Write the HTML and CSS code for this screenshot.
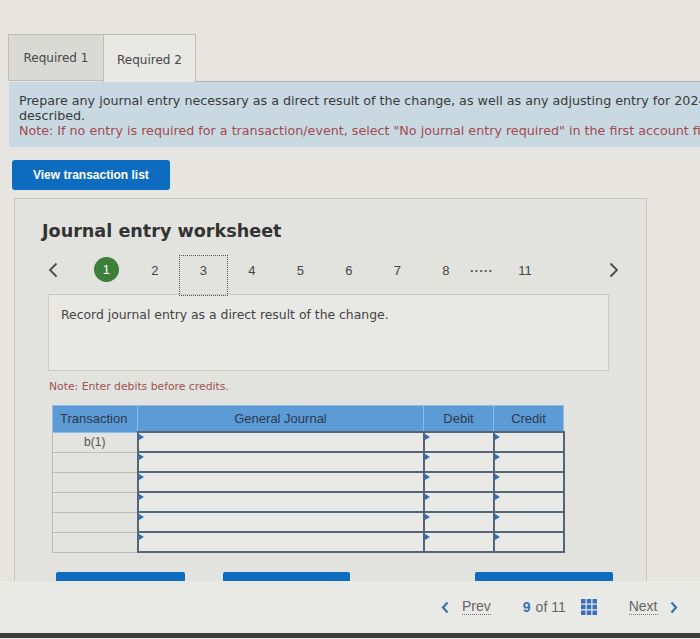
FILE: index.html
```html
<!DOCTYPE html>
<html>
<head>
<meta charset="utf-8">
<title>Journal entry worksheet</title>
<link rel="stylesheet" href="styles.css">
</head>
<body>
<div class="page">
  <div class="tabs">
    <div class="tab">Required 1</div>
    <div class="tab active">Required 2</div>
    <div class="tab-rest"></div>
  </div>

  <div class="instructions">
    <span class="line">Prepare any journal entry necessary as a direct result of the change, as well as any adjusting entry for 2024 related to the situation</span>
    <span class="line">described.</span>
    <span class="line note">Note: If no entry is required for a transaction/event, select "No journal entry required" in the first account field.</span>
  </div>

  <div class="actions">
    <button class="btn-list">View transaction list</button>
  </div>

  <section class="worksheet">
    <h2 class="ws-title">Journal entry worksheet</h2>
    <div class="pager">
      <span class="pg-arrow prev">
        <svg width="10" height="16" viewBox="0 0 10 16"><path d="M8.5 1.5 L2 8 L8.5 14.5" fill="none" stroke="#4a4a4a" stroke-width="1.8"/></svg>
      </span>
      <span class="pg-cell"><span class="pg-current">1</span></span>
      <span class="pg-cell">2</span>
      <span class="pg-cell focused">3</span>
      <span class="pg-cell">4</span>
      <span class="pg-cell">5</span>
      <span class="pg-cell">6</span>
      <span class="pg-cell">7</span>
      <span class="pg-cell">8</span>
      <span class="pg-dots">.....</span>
      <span class="pg-cell last">11</span>
      <span class="pg-arrow next">
        <svg width="10" height="16" viewBox="0 0 10 16"><path d="M1.5 1.5 L8 8 L1.5 14.5" fill="none" stroke="#4a4a4a" stroke-width="1.8"/></svg>
      </span>
    </div>

    <div class="record-box">Record journal entry as a direct result of the change.</div>

    <p class="ws-note">Note: Enter debits before credits.</p>

    <table class="journal">
      <thead>
        <tr>
          <th class="c-trans">Transaction</th>
          <th class="c-gj">General Journal</th>
          <th class="c-dr">Debit</th>
          <th class="c-cr">Credit</th>
        </tr>
      </thead>
      <tbody>
        <tr><td class="trans">b(1)</td><td class="inp"></td><td class="inp"></td><td class="inp"></td></tr>
        <tr><td class="trans"></td><td class="inp"></td><td class="inp"></td><td class="inp"></td></tr>
        <tr><td class="trans"></td><td class="inp"></td><td class="inp"></td><td class="inp"></td></tr>
        <tr><td class="trans"></td><td class="inp"></td><td class="inp"></td><td class="inp"></td></tr>
        <tr><td class="trans"></td><td class="inp"></td><td class="inp"></td><td class="inp"></td></tr>
        <tr><td class="trans"></td><td class="inp"></td><td class="inp"></td><td class="inp"></td></tr>
      </tbody>
    </table>

    <div class="ws-buttons">
      <button class="btn btn-record">Record entry</button>
      <button class="btn btn-clear">Clear entry</button>
      <button class="btn btn-view">View general journal</button>
    </div>
  </section>

  <nav class="bottom-nav">
    <span class="nav-chev">
      <svg width="8" height="13" viewBox="0 0 8 13"><path d="M6.5 1.5 L2 6.5 L6.5 11.5" fill="none" stroke="#3d6fb3" stroke-width="2.2"/></svg>
    </span>
    <span class="nav-link prev-link">Prev</span>
    <span class="nav-num">9</span>
    <span class="nav-of">of 11</span>
    <span class="nav-grid">
      <svg width="16" height="16" viewBox="0 0 16 16">
        <rect x="0" y="0" width="4.5" height="4.5" fill="#3a6fc2"/><rect x="5.75" y="0" width="4.5" height="4.5" fill="#3a6fc2"/><rect x="11.5" y="0" width="4.5" height="4.5" fill="#3a6fc2"/>
        <rect x="0" y="5.75" width="4.5" height="4.5" fill="#3a6fc2"/><rect x="5.75" y="5.75" width="4.5" height="4.5" fill="#3a6fc2"/><rect x="11.5" y="5.75" width="4.5" height="4.5" fill="#3a6fc2"/>
        <rect x="0" y="11.5" width="4.5" height="4.5" fill="#3a6fc2"/><rect x="5.75" y="11.5" width="4.5" height="4.5" fill="#3a6fc2"/><rect x="11.5" y="11.5" width="4.5" height="4.5" fill="#3a6fc2"/>
      </svg>
    </span>
    <span class="nav-link next-link">Next</span>
    <span class="nav-chev next-chev">
      <svg width="8" height="13" viewBox="0 0 8 13"><path d="M1.5 1.5 L6 6.5 L1.5 11.5" fill="none" stroke="#3d6fb3" stroke-width="2.2"/></svg>
    </span>
  </nav>
  <div class="bezel"></div>
</div>
</body>
</html>
```

FILE: styles.css
```css
html, body {
  margin: 0;
  padding: 0;
}
body {
  background: #e6e5e0;
  overflow: hidden;
}
.page {
  width: 700px;
  height: 639px;
  overflow: hidden;
  background: #e6e5e0;
  font-family: "DejaVu Sans", Verdana, sans-serif;
  color: #3a3a3a;
}

/* Tabs */
.tabs {
  display: flex;
  align-items: flex-end;
  padding: 34px 0 0 8px;
}
.tab {
  box-sizing: border-box;
  height: 47px;
  width: 96px;
  display: flex;
  align-items: center;
  justify-content: center;
  font-size: 12px;
  color: #474747;
  background: #d9d9d5;
  border: 1px solid #bdbdb8;
  margin-bottom: 1px;
}
.tab.active {
  width: 93px;
  height: 48px;
  margin-left: -1px;
  margin-bottom: 0;
  background: #e8e8e4;
  border-bottom: none;
  padding-top: 2px;
}
.tab-rest {
  flex: 1;
  height: 1px;
  background: #b3b3ae;
}

/* Instructions */
.instructions {
  width: 1100px;
  margin-left: 9px;
  box-sizing: border-box;
  height: 65px;
  padding: 11px 10px 0 10px;
  background: #c8d9e2;
  font-size: 12.7px;
  line-height: 15px;
  color: #3a3a3a;
}
.instructions .line {
  display: block;
  white-space: nowrap;
}
.instructions .note {
  color: #a34a50;
}

/* Transaction list button */
.actions {
  padding: 13px 0 0 12px;
}
.btn-list {
  display: block;
  width: 158px;
  height: 30px;
  border: none;
  border-radius: 3px;
  background: #0d6cc0;
  color: #ffffff;
  font-family: "Liberation Sans", Arial, sans-serif;
  font-weight: bold;
  font-size: 12px;
  text-align: left;
  padding: 0 0 0 21px;
}

/* Worksheet panel */
.worksheet {
  box-sizing: border-box;
  margin: 8px 0 0 14px;
  width: 633px;
  height: 383px;
  overflow: hidden;
  border: 1px solid #c7c7c2;
  border-bottom: none;
  background: #e2e2de;
}
.ws-title {
  margin: 0;
  padding: 21px 0 0 27px;
  font-size: 17.6px;
  line-height: 22px;
  font-weight: bold;
  color: #333333;
}

/* Pager */
.pager {
  display: flex;
  height: 41px;
  margin: 13px 0 0 33px;
  font-family: "Liberation Sans", Arial, sans-serif;
  font-size: 13px;
  color: #454545;
}
.pg-arrow {
  display: block;
  width: 34px;
  padding-top: 7px;
}
.pg-arrow.next {
  margin-left: 59px;
}
.pg-cell {
  box-sizing: border-box;
  width: 48.5px;
  height: 41px;
  display: flex;
  justify-content: center;
  align-items: flex-start;
  padding-top: 8px;
  line-height: 15px;
}
.pg-cell.focused {
  border: 1px dotted #555555;
  padding-top: 7px;
}
.pg-cell.last {
  width: 50px;
}
.pg-current {
  display: block;
  width: 25px;
  height: 25px;
  margin-top: -6px;
  border-radius: 50%;
  background: #3b7f39;
  color: #ffffff;
  text-align: center;
  line-height: 25px;
}
.pg-dots {
  width: 30px;
  padding-top: 5px;
  font-weight: bold;
  letter-spacing: 1px;
  color: #555555;
}

/* Record box */
.record-box {
  box-sizing: border-box;
  margin: -2px 0 0 33px;
  width: 561px;
  height: 77px;
  border: 1px solid #c9c9c5;
  background: #e8e8e5;
  padding: 12px 12px;
  font-size: 12.4px;
  line-height: 15px;
  color: #444444;
}

.ws-note {
  margin: 9px 0 0 34px;
  font-size: 10.8px;
  line-height: 14px;
  color: #a0524f;
}

/* Journal table */
.journal {
  margin: 11px 0 0 37px;
  width: 508px;
  border-collapse: collapse;
  table-layout: fixed;
  font-family: "Liberation Sans", Arial, sans-serif;
}
.journal th {
  height: 25px;
  padding: 0;
  background: #5d9bd6;
  color: #2b3a4c;
  font-size: 13px;
  font-weight: normal;
  border: 1px solid #8fbde6;
  text-align: center;
}
.journal th.c-trans {
  width: 85px;
  text-align: left;
  padding-left: 7px;
  box-sizing: border-box;
}
.journal th.c-gj { width: 285px; }
.journal th.c-dr { width: 69px; }
.journal th.c-cr { width: 69px; }
.journal td {
  height: 18px;
  padding: 0;
}
.journal td.trans {
  border: 1px solid #bcbcb7;
  text-align: center;
  font-size: 12px;
  line-height: 14px;
  color: #555555;
  background: #e3e3df;
}
.journal td.inp {
  position: relative;
  border: 2px solid #56647a;
  background: #e9e9e6;
}
.journal td.inp::before {
  content: "";
  position: absolute;
  left: 0;
  top: 1px;
  border-left: 5px solid #2f6fba;
  border-top: 3px solid transparent;
  border-bottom: 3px solid transparent;
}

/* Worksheet buttons (clipped by the panel) */
.ws-buttons {
  display: flex;
  margin-top: 19px;
}
.btn {
  box-sizing: border-box;
  height: 30px;
  border: none;
  border-radius: 2px;
  background: #0d6cc0;
  color: #ffffff;
  font-family: "Liberation Sans", Arial, sans-serif;
  font-weight: bold;
  font-size: 13px;
  line-height: 15px;
  padding: 6px 0 9px 0;
}
.btn-record { margin-left: 41px; width: 129px; }
.btn-clear { margin-left: 38px; width: 127px; }
.btn-view { margin-left: 125px; width: 138px; }

/* Bottom navigation */
.bottom-nav {
  display: flex;
  align-items: center;
  height: 52px;
  padding-left: 441px;
  font-family: "Liberation Sans", Arial, sans-serif;
  font-size: 14px;
  color: #666666;
  background: #e9e9e5;
}
.nav-chev {
  display: block;
  height: 13px;
}
.nav-link {
  border-bottom: 1px dotted #777777;
  line-height: 15px;
}
.prev-link { margin-left: 13px; }
.nav-num {
  margin-left: 32px;
  font-weight: bold;
  color: #3a6fb0;
}
.nav-of { margin-left: 5px; }
.nav-grid {
  display: block;
  height: 16px;
  margin-left: 15px;
}
.next-link { margin-left: 32px; }
.next-chev { margin-left: 12px; }

.bezel {
  height: 5px;
  background: #3c3c3c;
}
```
